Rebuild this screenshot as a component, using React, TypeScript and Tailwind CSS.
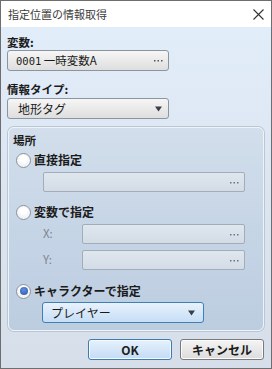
import React from 'react';

const font = { fontFamily: '"Noto Sans CJK JP", "Noto Sans", sans-serif' };

function Dots({ color = '#555' }: { color?: string }) {
  return (
    <svg width="9" height="3" viewBox="0 0 9 3" className="shrink-0">
      <rect x="0" y="1" width="1.5" height="1.5" fill={color} />
      <rect x="3.5" y="1" width="1.5" height="1.5" fill={color} />
      <rect x="7" y="1" width="1.5" height="1.5" fill={color} />
    </svg>
  );
}

function Arrow() {
  return (
    <svg width="7" height="6" viewBox="0 0 7 6" className="shrink-0">
      <path d="M0 0.5 H7 L3.5 5.5 Z" fill="#3a3f46" />
    </svg>
  );
}

function Radio({ checked, label }: { checked?: boolean; label: string }) {
  return (
    <div className="flex items-center h-[16px] ml-[7px]">
      <div className="w-[15px] h-[15px] rounded-full border border-[#8d939b] bg-[radial-gradient(circle_at_50%_35%,#ffffff_30%,#dfe3e8_100%)] flex items-center justify-center shadow-[inset_0_0_0_1px_#f7f7f7]">
        {checked && (
          <div className="w-[8px] h-[8px] rounded-full bg-[radial-gradient(circle_at_45%_35%,#5f8fe0_0%,#2a52a8_100%)]" />
        )}
      </div>
      <span className="ml-[3px] text-[12px] font-bold text-[#1b1b1b] leading-none">{label}</span>
    </div>
  );
}

function DisabledField({ width }: { width: string }) {
  return (
    <div
      className={`${width} h-[20px] rounded-[2px] border border-[#a3adb8] bg-[linear-gradient(#dfe6ee,#d3dce6)] flex items-center justify-end pr-[5px]`}
    >
      <Dots color="#6b7580" />
    </div>
  );
}

export default function App() {
  return (
    <div style={font} className="w-[272px] h-[369px] border border-[#6e6e6e] flex flex-col bg-white overflow-hidden">
      <div className="h-[26px] bg-white flex items-center justify-between pl-[7px] pr-[7px] shrink-0">
        <span className="text-[11px] text-[#3c3c3c] leading-none">指定位置の情報取得</span>
        <svg width="11" height="11" viewBox="0 0 11 11">
          <path d="M0.5 0.5 L10.5 10.5 M10.5 0.5 L0.5 10.5" stroke="#333" strokeWidth="1.1" />
        </svg>
      </div>

      <div className="flex-1 flex flex-col pl-[6px] bg-[linear-gradient(#e2edfa_0%,#dce6f2_45%,#d6dfe9_100%)]">
        <div className="mt-[9px] h-[14px] flex items-center text-[11.5px] font-bold text-[#1b1b1b] leading-none">変数:</div>
        <div className="mt-0 w-[162px] h-[21px] rounded-[3px] border border-[#8c949d] bg-[linear-gradient(#f6f6f6,#dedede)] flex items-center justify-between pl-[8px] pr-[5px]">
          <span className="text-[11.5px] text-[#1b1b1b] leading-none">
            <span style={{ fontFamily: '"DejaVu Sans Mono", monospace' }} className="text-[10.5px]">0001</span> 一時変数A
          </span>
          <Dots />
        </div>

        <div className="mt-[12px] h-[14px] flex items-center text-[11.5px] font-bold text-[#1b1b1b] leading-none">情報タイプ:</div>
        <div className="mt-[1px] w-[162px] h-[21px] rounded-[3px] border border-[#8c949d] bg-[linear-gradient(#f6f6f6,#dedede)] flex items-center justify-between pl-[10px] pr-[6px]">
          <span className="text-[12px] text-[#1b1b1b] leading-none">地形タグ</span>
          <Arrow />
        </div>

        <div className="mt-[8px] ml-[1px] w-[256px] h-[204px] rounded-[6px] border border-[#eef3f9] bg-[linear-gradient(#d2deeb_0%,#c6d5e6_50%,#bccde0_100%)] flex flex-col shadow-[0_0_0_1px_#b9c6d4] shrink-0">
          <div className="mt-[6px] ml-[4px] h-[14px] flex items-center text-[11.5px] font-bold text-[#1b1b1b] leading-none">場所</div>

          <div className="mt-[4px]">
            <Radio label="直接指定" />
          </div>
          <div className="mt-[4px] ml-[34px]">
            <DisabledField width="w-[202px]" />
          </div>

          <div className="mt-[12px]">
            <Radio label="変数で指定" />
          </div>
          <div className="mt-[4px] flex items-center h-[20px]">
            <span className="ml-[34px] w-[39px] text-[11.5px] text-[#7d8590] leading-none">X:</span>
            <DisabledField width="w-[163px]" />
          </div>
          <div className="mt-[6px] flex items-center h-[20px]">
            <span className="ml-[34px] w-[39px] text-[11.5px] text-[#7d8590] leading-none">Y:</span>
            <DisabledField width="w-[163px]" />
          </div>

          <div className="mt-[13px]">
            <Radio checked label="キャラクターで指定" />
          </div>
          <div className="mt-[3px] ml-[33px] w-[162px] h-[21px] rounded-[3px] border border-[#3f7fb8] bg-[linear-gradient(#e8f2fc,#c6def6)] flex items-center justify-between pl-[8px] pr-[8px]">
            <span className="text-[12px] text-[#1b1b1b] leading-none">プレイヤー</span>
            <Arrow />
          </div>
        </div>

        <div className="mt-[8px] flex justify-end gap-[8px] pr-[7px]">
          <button className="w-[84px] h-[21px] rounded-[3px] border border-[#3d7bb0] bg-[linear-gradient(#e6f1fc,#c4dcf5)] text-[12px] font-bold text-[#1b1b1b] leading-none shadow-[inset_0_0_0_1px_#f4f9ff]">
            OK
          </button>
          <button className="w-[84px] h-[21px] rounded-[3px] border border-[#7a7a7a] bg-[linear-gradient(#f4f4f4,#dcdcdc)] text-[12px] font-bold text-[#1b1b1b] leading-none shadow-[inset_0_0_0_1px_#fbfbfb]">
            キャンセル
          </button>
        </div>
      </div>
    </div>
  );
}
